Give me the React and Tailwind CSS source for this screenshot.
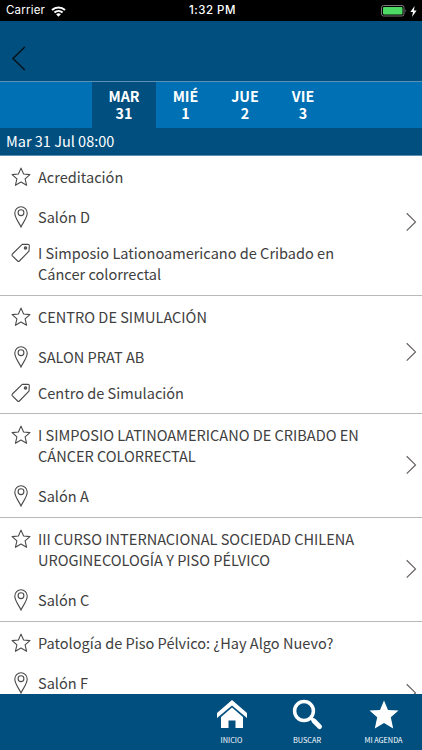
import React, { useState } from "react";

const days = [
  { name: "MAR", number: 31, width: "w-16" },
  { name: "MIÉ", number: 1, width: "w-[59px]" },
  { name: "JUE", number: 2, width: "w-[60px]" },
  { name: "VIE", number: 3, width: "w-14" },
];

const sessions = [
  {
    title: "Acreditación",
    room: "Salón D",
    tag: "I Simposio Lationoamericano de Cribado en Cáncer colorrectal",
    height: "h-[140px]",
    arrow: "pt-[45.5px]",
  },
  {
    title: "CENTRO DE SIMULACIÓN",
    room: "SALON PRAT AB",
    tag: "Centro de Simulación",
    height: "h-[118px]",
    arrow: "pt-[36px]",
  },
  {
    title: "I SIMPOSIO LATINOAMERICANO DE CRIBADO EN CÁNCER COLORRECTAL",
    room: "Salón A",
    height: "h-[104px]",
    arrow: "pt-[31px]",
  },
  {
    title: "III CURSO INTERNACIONAL SOCIEDAD CHILENA UROGINECOLOGÍA Y PISO PÉLVICO",
    room: "Salón C",
    height: "h-[104px]",
    arrow: "pt-[30.5px]",
  },
  {
    title: "Patología de Piso Pélvico: ¿Hay Algo Nuevo?",
    room: "Salón F",
    height: "h-[140px]",
    arrow: "pt-[51px]",
  },
];

function StarIcon() {
  return (
    <svg width="20" height="20" viewBox="0 0 20 20" fill="none" stroke="#4a4a4a" strokeWidth="1.1" strokeLinejoin="round">
      <path d="M10 1.1 12.6 7 18.9 7.6 14.1 11.8 15.6 18.3 10 15 4.4 18.3 5.9 11.8 1.1 7.6 7.4 7Z" />
    </svg>
  );
}

function PinIcon() {
  return (
    <svg width="20" height="22" viewBox="0 0 20 22" fill="none" stroke="#4a4a4a" strokeWidth="1.1">
      <path d="M10 21C8.2 16.8 3.8 12 3.8 7A6.2 6.2 0 0 1 16.2 7C16.2 12 11.8 16.8 10 21Z" />
      <circle cx="10" cy="6.7" r="2.9" />
    </svg>
  );
}

function TagIcon() {
  return (
    <svg width="20" height="20" viewBox="0 0 20 20" fill="none" stroke="#4a4a4a" strokeWidth="1.1" strokeLinejoin="round">
      <path d="M11.2 1.4 17 1.2Q18.3 1.2 18.3 2.5L18 8.2 8.4 18Q7.5 18.8 6.6 18L1.4 12.8Q.6 11.9 1.4 11Z" />
      <circle cx="14.5" cy="4.9" r="1.2" fill="#777" />
    </svg>
  );
}

function StatusBar() {
  return (
    <div className="grid h-[21px] shrink-0 grid-cols-3 items-center bg-black pt-px pr-[5px] pl-[6px] font-['Inter',sans-serif] text-[11.5px] text-white">
      <div className="flex items-center gap-[6px]">
        <span className="tracking-[0.2px]">Carrier</span>
        <svg width="15" height="11" viewBox="0 0 15 11" fill="none" stroke="white" strokeWidth="2">
          <path d="M1 4.1C4.7.6 10.3.6 14 4.1M3.4 6.6C5.8 4.4 9.2 4.4 11.6 6.6" />
          <path d="M5.1 8.3Q7.5 6.3 9.9 8.3L7.5 10.7Z" fill="white" stroke="none" />
        </svg>
      </div>
      <span className="pl-[2px] text-center font-medium tracking-[0.5px]">1:32 PM</span>
      <div className="flex items-center justify-end gap-[3px]">
        <svg width="26" height="12" viewBox="0 0 26 12">
          <rect x=".5" y=".5" width="22.5" height="10.5" rx="2" fill="none" stroke="#777" />
          <rect x="2" y="2" width="19.5" height="7.5" rx="1" fill="#4cd964" />
          <path d="M24.3 4Q26 5.7 24.3 7.5Z" fill="#777" />
        </svg>
        <svg width="7" height="11" viewBox="0 0 7 11" fill="white">
          <path d="M4.6 0 .4 6H3L2 11 6.6 4.5H3.9Z" />
        </svg>
      </div>
    </div>
  );
}

function Session({ session }) {
  return (
    <li className={`flex shrink-0 border-b border-[#b9b9b9] pt-[10px] ${session.height}`}>
      <div className="w-[370px] pl-[11px] text-[14.56px] leading-[21px] text-[#404040]">
        <div className="mb-[19.4px] flex gap-[7px]">
          <span className="shrink-0 pt-px"><StarIcon /></span>
          <span>{session.title}</span>
        </div>
        <div className="mb-[15px] flex gap-[7px]">
          <span className="h-[21px] shrink-0"><PinIcon /></span>
          <span>{session.room}</span>
        </div>
        {session.tag && (
          <div className="flex gap-[7px]">
            <span className="h-[21px] shrink-0 pt-px"><TagIcon /></span>
            <span>{session.tag}</span>
          </div>
        )}
      </div>
      <div className={`ml-auto pr-[5px] ${session.arrow}`}>
        <svg width="12" height="20" viewBox="0 0 12 20" fill="none" stroke="#656060" strokeWidth="1.2">
          <path d="M1.7 1.2 10.5 9.9 1.7 18.6" />
        </svg>
      </div>
    </li>
  );
}

function BottomNav() {
  return (
    <nav className="flex h-14 shrink-0 justify-end bg-[#004f7f] text-[7.3px] leading-[12px] text-white">
      <button className="flex w-[76px] flex-col items-center gap-[5px] pt-[6px] pl-px">
        <svg width="32" height="29" viewBox="0 0 32 29" fill="white">
          <path d="M16 0 31 13V18L16 5.5 1 18V13Z" />
          <path d="M16 7.5 27 17V28H19.5V20.5H12.5V28H5V17Z" />
        </svg>
        <span>INICIO</span>
      </button>
      <button className="flex w-[76px] flex-col items-center gap-[4px] pt-[5px]">
        <svg width="31" height="31" viewBox="0 0 31 31" fill="none" stroke="white">
          <circle cx="12" cy="12" r="9.4" strokeWidth="3.5" />
          <path d="M18.7 18.7 21.5 21.5" strokeWidth="3" />
          <path d="M21.8 21.8 27.6 27.6" strokeWidth="4.8" strokeLinecap="round" />
        </svg>
        <span>BUSCAR</span>
      </button>
      <button className="flex w-[77px] flex-col items-center gap-[5px] pt-[6px]">
        <svg width="30" height="29" viewBox="0 0 30 29" fill="white">
          <path d="M15 .5 19 10 29.5 10.5 21.8 17.3 24.2 28.5 15 22.9 5.8 28.5 8.2 17.3 .5 10.5 11 10Z" />
        </svg>
        <span>MI AGENDA</span>
      </button>
    </nav>
  );
}

function App() {
  const [selected, setSelected] = useState(31);

  return (
    <div className="flex h-[750px] w-[422px] flex-col overflow-hidden bg-white font-['Noto_Sans_CJK_SC',sans-serif]">
      <StatusBar />
      <header className="h-[61px] shrink-0 border-b border-[#5d92b5] bg-[#004f7f] pt-[25px] pl-[11px]">
        <svg width="16" height="25" viewBox="0 0 16 25" fill="none" stroke="#071219" strokeWidth="1.5">
          <path d="M13.8 1 2 12.5 13.8 24" />
        </svg>
      </header>
      <div className="flex h-[46px] shrink-0 bg-[#0070b4] pl-[92px]">
        {days.map((day) => (
          <button
            key={day.number}
            onClick={() => setSelected(day.number)}
            className={`pt-[6px] pb-[7px] text-center text-[14.3px] leading-[16.5px] font-bold text-white ${day.width} ${
              selected === day.number ? "bg-[#004f7f]" : ""
            }`}
          >
            {day.name}
            <br />
            {day.number}
          </button>
        ))}
      </div>
      <h2 className="h-7 shrink-0 border-b border-[#5d8db0] bg-[#004f7f] pl-[6px] text-[14.5px] leading-[26px] text-white">
        Mar 31 Jul 08:00
      </h2>
      <ul className="flex min-h-0 flex-1 flex-col overflow-hidden">
        {sessions.map((session) => (
          <Session key={session.title} session={session} />
        ))}
      </ul>
      <BottomNav />
    </div>
  );
}

export default App;
